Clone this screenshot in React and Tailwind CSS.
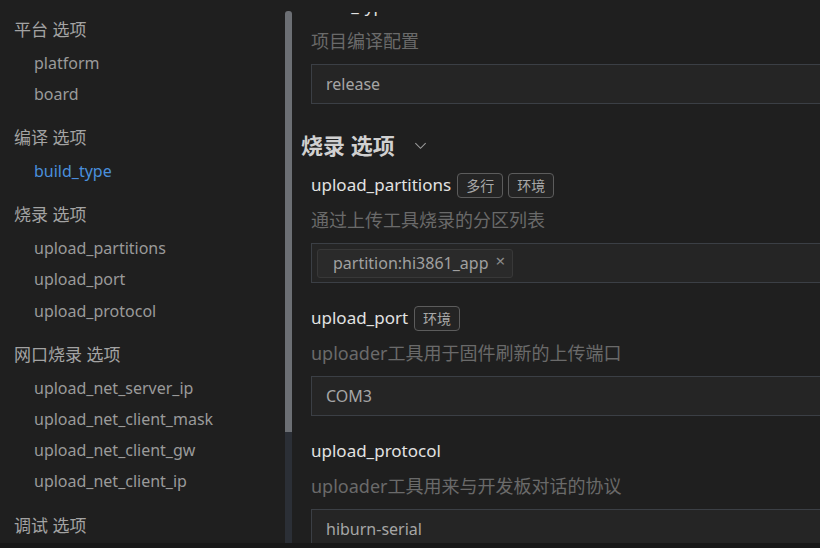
import React from "react";

const FONT = { fontFamily: '"Noto Sans", "Noto Sans CJK SC", sans-serif' };

function SideHeading({ children, first }) {
  return (
    <div className={`h-[36px] flex items-center pl-[14px] text-[17px] text-[#a3a3a3] ${first ? "mt-[12px]" : "mt-[11px]"}`}>
      {children}
    </div>
  );
}

function SideItem({ children, active }) {
  return (
    <div className={`h-[32px] flex items-center pl-[34px] text-[16px] ${active ? "text-[#4a8fdc]" : "text-[#9a9a9a]"}`}>
      {children}
    </div>
  );
}

function Tag({ children }) {
  return (
    <span className="h-[25px] px-[8px] flex items-center rounded-[4px] border border-[#5c5c5c] bg-[#242424] text-[14px] text-[#a8a8a8]">
      {children}
    </span>
  );
}

function Setting({ label, tags = [], desc, children, first }) {
  return (
    <div className={first ? "" : "mt-[22px]"}>
      <div className="h-[26px] flex items-center gap-[5px] pl-[10px]">
        <span className="text-[17px] text-[#e2e2e2] mr-[1px]">{label}</span>
        {tags.map((t) => (
          <Tag key={t}>{t}</Tag>
        ))}
      </div>
      <div className="mt-[10px] h-[24px] leading-[24px] pl-[10px] text-[18px] text-[#6a6a6a] whitespace-nowrap">{desc}</div>
      <div className="mt-[11px] ml-[10px] h-[40px] w-[620px] border border-[#3b3f45] bg-[#252525] flex items-center text-[16px] text-[#a6a6a6]">
        {children}
      </div>
    </div>
  );
}

export default function App() {
  return (
    <div className="w-[820px] h-[548px] bg-[#1f1f1f] flex flex-col overflow-hidden" style={FONT}>
      <div className="h-[543px] flex overflow-hidden">
        <div className="w-[285px] shrink-0 flex flex-col">
          <SideHeading first>平台 选项</SideHeading>
          <SideItem>platform</SideItem>
          <SideItem>board</SideItem>
          <SideHeading>编译 选项</SideHeading>
          <SideItem active>build_type</SideItem>
          <SideHeading>烧录 选项</SideHeading>
          <SideItem>upload_partitions</SideItem>
          <SideItem>upload_port</SideItem>
          <SideItem>upload_protocol</SideItem>
          <SideHeading>网口烧录 选项</SideHeading>
          <SideItem>upload_net_server_ip</SideItem>
          <SideItem>upload_net_client_mask</SideItem>
          <SideItem>upload_net_client_gw</SideItem>
          <SideItem>upload_net_client_ip</SideItem>
          <SideHeading>调试 选项</SideHeading>
        </div>
        <div className="w-[7px] shrink-0 flex flex-col">
          <div className="h-[11px]" />
          <div className="h-[421px] bg-[#6c6f74] rounded-t-[3px]" />
          <div className="flex-1 bg-[#2b2f36]" />
        </div>
        <div className="flex-1 flex flex-col overflow-hidden pl-[9px]">
          <div className="h-[12px] shrink-0" />
          <div className="flex-1 overflow-hidden">
            <div className="mt-[-19px]">
              <Setting first label="build_type" desc="项目编译配置">
                <span className="pl-[14px]">release</span>
              </Setting>
              <div className="mt-[24px] mb-[10px] h-[34px] flex items-center">
                <span className="text-[22px] font-semibold text-[#d0d0d0]">烧录 选项</span>
                <svg className="ml-[18px]" width="15" height="15" viewBox="0 0 16 16" fill="none">
                  <path d="M2.5 5.5 L8 11 L13.5 5.5" stroke="#9a9a9a" strokeWidth="1.2" />
                </svg>
              </div>
              <Setting first label="upload_partitions" tags={["多行", "环境"]} desc="通过上传工具烧录的分区列表">
                <span className="ml-[5px] h-[29px] flex items-center rounded-[3px] border border-[#383838] bg-[#2a2a2a] pl-[15px] pr-[7px] text-[#a0a0a0]">
                  partition:hi3861_app
                  <span className="ml-[7px] text-[17px] leading-none text-[#8a8a8a] -mt-[6px]">×</span>
                </span>
              </Setting>
              <Setting label="upload_port" tags={["环境"]} desc="uploader工具用于固件刷新的上传端口">
                <span className="pl-[14px]">COM3</span>
              </Setting>
              <Setting label="upload_protocol" desc="uploader工具用来与开发板对话的协议">
                <span className="pl-[14px]">hiburn-serial</span>
              </Setting>
            </div>
          </div>
        </div>
      </div>
      <div className="h-[5px] bg-[#181818]" />
    </div>
  );
}
